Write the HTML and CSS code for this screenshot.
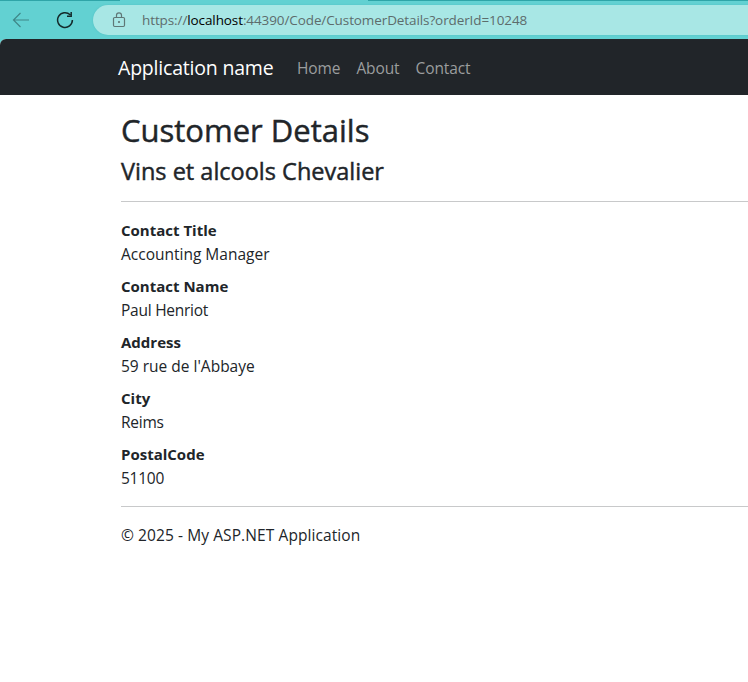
FILE: index.html
```html
<!DOCTYPE html>
<html lang="en">
<head>
<meta charset="utf-8">
<title>Customer Details</title>
<link rel="stylesheet" href="styles.css">
</head>
<body>
<header class="browser">
  <div class="tabstrip"><span class="tab"></span></div>
  <div class="toolbar">
    <svg class="back" width="18" height="16" viewBox="0 0 18 16"><path d="M17 8H1.5M8.5 1L1.5 8l7 7"/></svg>
    <svg class="reload" width="18" height="18" viewBox="0 0 18 18"><path d="M14.2 3.8A7.4 7.4 0 1 0 16.4 9M15.2 1v4.2H11"/></svg>
    <div class="address">
      <svg class="lock" width="14" height="16" viewBox="0 0 14 16"><rect x="1.5" y="5.5" width="11" height="9" rx="1.2"/><path d="M4.5 5.5V3.3a2.5 2.5 0 0 1 5 0v2.2"/><circle cx="7" cy="10" r=".5"/></svg>
      <span class="url">https://<b>localhost</b>:44390/Code/CustomerDetails?orderId=10248</span>
    </div>
  </div>
</header>
<div class="page">
  <nav class="navbar">
    <a class="brand">Application name</a>
    <a class="link">Home</a>
    <a class="link">About</a>
    <a class="link">Contact</a>
  </nav>
  <main class="content">
    <h2>Customer Details</h2>
    <h4>Vins et alcools Chevalier</h4>
    <hr>
    <dl>
      <dt>Contact Title</dt><dd>Accounting Manager</dd>
      <dt>Contact Name</dt><dd class="tight">Paul Henriot</dd>
      <dt>Address</dt><dd>59 rue de l'Abbaye</dd>
      <dt>City</dt><dd class="tight">Reims</dd>
      <dt>PostalCode</dt><dd class="tight">51100</dd>
    </dl>
    <hr>
    <footer>© 2025 - My ASP.NET Application</footer>
  </main>
</div>
</body>
</html>
```
FILE: styles.css
```css
* { box-sizing: border-box; }
body { margin: 0; height: 682px; overflow: hidden; background: #62d1d2; color: #212529; font: 15.5px/24px "Segoe UI", "Open Sans", "Noto Sans", sans-serif; white-space: nowrap; }
svg { fill: none; flex: none; }
.browser { height: 39px; }
.tabstrip { height: 1px; background: #2fa5a8; display: flex; padding-left: 120px; }
.tab { width: 248px; background: #62d1d2; }
.tabstrip { background: linear-gradient(90deg, #2fa5a8 120px, #62d1d2 120px 368px, #2fa5a8 368px); }
.toolbar { height: 38px; display: flex; align-items: center; padding-left: 12px; }
.back { stroke: #3f8788; stroke-width: 1.2; }
.reload { stroke: #142a2b; stroke-width: 1.5; margin-left: 26px; }
.address { flex: 1; height: 30px; margin-left: 19px; padding-left: 19px; display: flex; align-items: center; background: #a8e7e5; border-radius: 15px 0 0 15px; box-shadow: 0 0 2px #50bfc1; }
.lock { stroke: #5f7776; stroke-width: 1.2; }
.url { margin-left: 16px; color: #5d6c6c; font-size: 13.5px; line-height: 20px; letter-spacing: -.1px; }
.url b { color: #000; font-weight: 400; }
.page { height: 643px; background: #fff; border-top-left-radius: 6px; overflow: hidden; }
.navbar { height: 56px; padding: 2px 0 0 118px; display: flex; align-items: center; background: #212529; }
.brand { width: 155px; margin-right: 24px; font-size: 19.5px; line-height: 30px; letter-spacing: -.2px; color: #fff; }
.link { margin-right: 16px; letter-spacing: -.1px; color: #9b9d9e; }
.content { padding: 16px 0 0 121px; }
h2, h4 { margin: 0; font-weight: 500; -webkit-text-stroke: .45px currentColor; }
h2 { margin-bottom: 8px; font-size: 31px; line-height: 38px; }
h4 { font-size: 23.5px; line-height: 28px; }
hr { height: 1px; margin: 16px 0; border: 0; background: #c8c9ca; }
dl { margin: 0; }
dt { font-size: 15px; font-weight: 700; }
dd { margin: 0 0 8px; }
.tight { letter-spacing: -.25px; }
footer { letter-spacing: .09px; }
```
